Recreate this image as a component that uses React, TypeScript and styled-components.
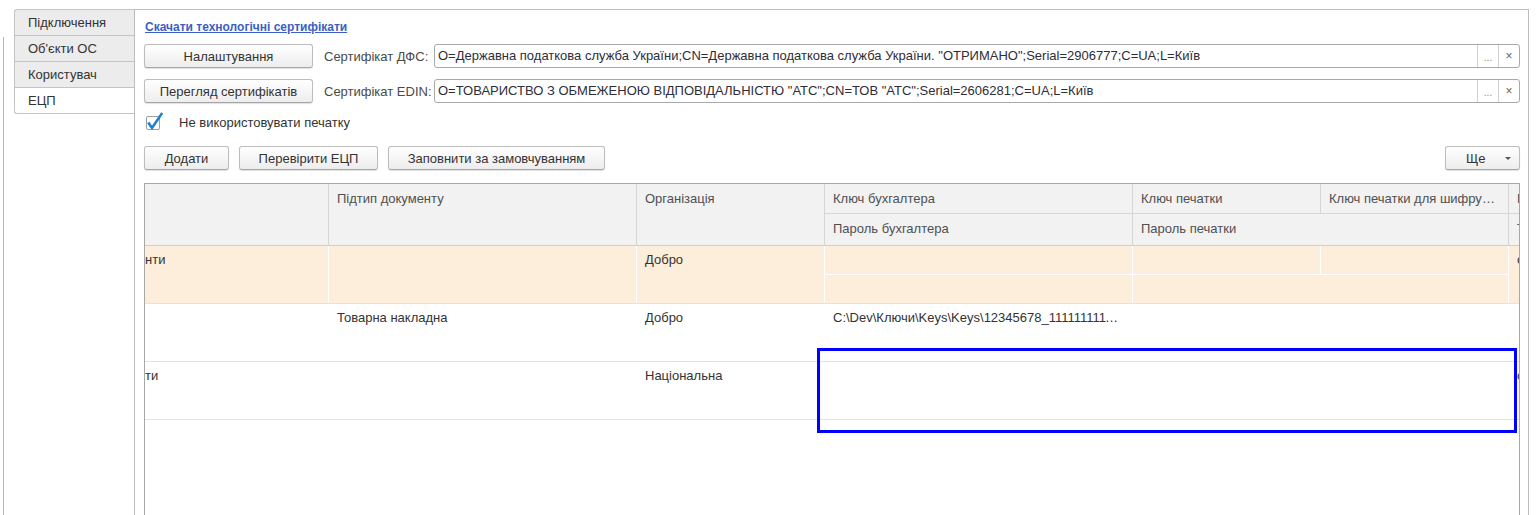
import React from "react";
import styled, { createGlobalStyle } from "styled-components";

const GlobalStyle = createGlobalStyle`
  html, body { margin: 0; padding: 0; overflow: hidden; background: #fff; }
  body { font-family: "Liberation Sans", Arial, sans-serif; font-size: 13px; color: #333; }
  * { box-sizing: border-box; }
`;

const COLS = "184px 308px 188px 308px 188px 188px 188px";

const Page = styled.div`
  display: flex;
  height: 515px;
  padding-top: 9px;
  overflow: hidden;
`;

const Gutter = styled.div`
  width: 14px;
  flex-shrink: 0;
  display: flex;
  padding: 28px 0 0 3px;
`;

const GutterLine = styled.div`
  width: 0;
  border-left: 1px solid #b8b8b8;
`;

const TabList = styled.div`
  width: 120px;
  flex-shrink: 0;
  display: flex;
  flex-direction: column;
`;

const Tab = styled.div<{ $active?: boolean; $first?: boolean; $last?: boolean }>`
  height: 27px;
  margin-top: ${(p) => (p.$first ? "0" : "-1px")};
  border: 1px solid #c4c4c4;
  border-right: none;
  border-radius: ${(p) => (p.$first ? "3px 0 0 0" : p.$last ? "0 0 0 3px" : "0")};
  background: ${(p) => (p.$active ? "#ffffff" : "#ececec")};
  padding-left: 13px;
  line-height: 25px;
  color: #333;
  white-space: nowrap;
`;

const Panel = styled.div`
  width: 1395px;
  flex-shrink: 0;
  border: 1px solid #bcbcbc;
  border-bottom: none;
  padding: 9px 8px 0 9px;
  display: flex;
  flex-direction: column;
`;

const LinkText = styled.a`
  align-self: flex-start;
  padding-left: 1px;
  font-size: 12px;
  font-weight: bold;
  line-height: 16px;
  color: #3c5fc4;
  text-decoration: underline;
  cursor: pointer;
`;

const Row = styled.div<{ $mt: number; $h?: number }>`
  display: flex;
  align-items: center;
  height: ${(p) => p.$h ?? 24}px;
  margin-top: ${(p) => p.$mt}px;
  flex-shrink: 0;
`;

const Button = styled.div<{ $w?: number; $ml?: number }>`
  width: ${(p) => (p.$w ? `${p.$w}px` : "auto")};
  margin-left: ${(p) => p.$ml ?? 0}px;
  height: 24px;
  flex-shrink: 0;
  border: 1px solid #bdbdbd;
  border-bottom-color: #a5a5a5;
  border-radius: 3px;
  background: linear-gradient(#ffffff, #ededed);
  box-shadow: 0 1px 1px rgba(0, 0, 0, 0.12);
  display: flex;
  align-items: center;
  justify-content: center;
  color: #333;
  white-space: nowrap;
`;

const MoreButton = styled(Button)`
  margin-left: auto;
  justify-content: flex-start;
  padding: 0 8px 0 20px;
`;

const Arrow = styled.span`
  margin-left: auto;
  width: 0;
  height: 0;
  border-left: 3px solid transparent;
  border-right: 3px solid transparent;
  border-top: 3px solid #555;
`;

const Label = styled.div`
  margin-left: 11px;
  width: 110px;
  flex-shrink: 0;
  color: #4a4a4a;
  white-space: nowrap;
`;

const Input = styled.div`
  flex: 1;
  height: 24px;
  border: 1px solid #a9a9a9;
  border-radius: 3px;
  display: flex;
  overflow: hidden;
  background: #fff;
`;

const InputText = styled.div`
  flex: 1;
  padding-left: 3px;
  line-height: 22px;
  white-space: nowrap;
  overflow: hidden;
  color: #2e2e3a;
`;

const InputButton = styled.div<{ $dots?: boolean }>`
  width: 21px;
  flex-shrink: 0;
  border-left: 1px solid #d2d2d2;
  display: flex;
  justify-content: center;
  align-items: ${(p) => (p.$dots ? "flex-end" : "center")};
  padding-bottom: ${(p) => (p.$dots ? "4px" : "0")};
  font-size: ${(p) => (p.$dots ? "10px" : "12px")};
  line-height: 10px;
  color: ${(p) => (p.$dots ? "#8a8a8a" : "#666")};
`;

const CheckBox = styled.div`
  position: relative;
  width: 14px;
  height: 14px;
  margin-left: 2px;
  border: 1px solid #9e9e9e;
  border-radius: 2px;
  background: #fff;
  flex-shrink: 0;
`;

const CheckMark = styled.svg`
  position: absolute;
  left: -1px;
  top: -5px;
`;

const CheckLabel = styled.div`
  margin-left: 19px;
  line-height: 14px;
  color: #333;
`;

const Table = styled.div`
  margin-top: 13px;
  height: 420px;
  flex-shrink: 0;
  border: 1px solid #a8a8a8;
  position: relative;
  overflow: hidden;
`;

const Header = styled.div`
  display: grid;
  grid-template-columns: ${COLS};
  grid-template-rows: 30px 31px;
  background: #f2f2f2;
  border-bottom: 1px solid #cfcfcf;
  width: max-content;
`;

const HCell = styled.div<{ $col: string; $row: string; $split?: boolean }>`
  grid-column: ${(p) => p.$col};
  grid-row: ${(p) => p.$row};
  border-right: 1px solid #d6d6d6;
  border-bottom: ${(p) => (p.$split ? "1px solid #d6d6d6" : "none")};
  padding: 0 8px;
  line-height: 29px;
  color: #505050;
  white-space: nowrap;
  overflow: hidden;
  text-overflow: ellipsis;
`;

const DataRow = styled.div<{ $hl?: boolean }>`
  display: grid;
  grid-template-columns: ${COLS};
  grid-template-rows: 29px 28px;
  background: ${(p) => (p.$hl ? "#fdeedb" : "#ffffff")};
  border-bottom: 1px solid #e3e3e3;
  width: max-content;
`;

const DCell = styled.div<{ $col: string; $row: string; $hl?: boolean; $split?: boolean; $flush?: boolean }>`
  grid-column: ${(p) => p.$col};
  grid-row: ${(p) => p.$row};
  border-right: 1px solid ${(p) => (p.$hl ? "#ffffff" : "transparent")};
  border-bottom: 1px solid ${(p) => (p.$split ? "#ffffff" : "transparent")};
  padding: 0 ${(p) => (p.$flush ? "0" : "8px")};
  line-height: 28px;
  color: #333;
  white-space: nowrap;
  overflow: hidden;
  text-overflow: ellipsis;
`;

const Highlight = styled.div`
  position: absolute;
  left: 672px;
  top: 164px;
  width: 700px;
  height: 85px;
  border: 3px solid #0000ff;
  pointer-events: none;
`;

type RowData = {
  hl?: boolean;
  first: string;
  subtype: string;
  org: string;
  key: string;
  last: string;
};

const rows: RowData[] = [
  { hl: true, first: "нти", subtype: "", org: "Добро", key: "", last: "с" },
  {
    first: "",
    subtype: "Товарна накладна",
    org: "Добро",
    key: "C:\\Dev\\Ключи\\Keys\\Keys\\12345678_11111111111111111.dat",
    last: "",
  },
  { first: "ти", subtype: "", org: "Національна", key: "", last: "с" },
];

export default function App() {
  return (
    <>
      <GlobalStyle />
      <Page>
        <Gutter>
          <GutterLine />
        </Gutter>
        <TabList>
          <Tab $first>Підключення</Tab>
          <Tab>Об'єкти ОС</Tab>
          <Tab>Користувач</Tab>
          <Tab $active $last>ЕЦП</Tab>
        </TabList>
        <Panel>
          <LinkText>Скачати технологічні сертифікати</LinkText>
          <Row $mt={9}>
            <Button $w={169}>Налаштування</Button>
            <Label>Сертифікат ДФС:</Label>
            <Input>
              <InputText>
                O=Державна податкова служба України;CN=Державна податкова служба України. "ОТРИМАНО";Serial=2906777;C=UA;L=Київ
              </InputText>
              <InputButton $dots>...</InputButton>
              <InputButton>×</InputButton>
            </Input>
          </Row>
          <Row $mt={11}>
            <Button $w={169}>Перегляд сертифікатів</Button>
            <Label>Сертифікат EDIN:</Label>
            <Input>
              <InputText>
                O=ТОВАРИСТВО З ОБМЕЖЕНОЮ ВІДПОВІДАЛЬНІСТЮ "АТС";CN=ТОВ "АТС";Serial=2606281;C=UA;L=Київ
              </InputText>
              <InputButton $dots>...</InputButton>
              <InputButton>×</InputButton>
            </Input>
          </Row>
          <Row $mt={13} $h={14}>
            <CheckBox>
              <CheckMark width="17" height="20" viewBox="0 0 17 20">
                <path d="M3 11.5 L6 16 L15.5 2" fill="none" stroke="#1f80d0" strokeWidth="2.6" strokeLinecap="square" />
              </CheckMark>
            </CheckBox>
            <CheckLabel>Не використовувати печатку</CheckLabel>
          </Row>
          <Row $mt={16}>
            <Button $w={85}>Додати</Button>
            <Button $w={139} $ml={10}>Перевірити ЕЦП</Button>
            <Button $w={217} $ml={10}>Заповнити за замовчуванням</Button>
            <MoreButton $w={75}>
              <span>Ще</span>
              <Arrow />
            </MoreButton>
          </Row>
          <Table>
            <Header>
              <HCell $col="1" $row="1 / 3"></HCell>
              <HCell $col="2" $row="1 / 3">Підтип документу</HCell>
              <HCell $col="3" $row="1 / 3">Організація</HCell>
              <HCell $col="4" $row="1" $split>Ключ бухгалтера</HCell>
              <HCell $col="4" $row="2">Пароль бухгалтера</HCell>
              <HCell $col="5" $row="1" $split>Ключ печатки</HCell>
              <HCell $col="6" $row="1" $split>Ключ печатки для шифрування</HCell>
              <HCell $col="5 / 7" $row="2">Пароль печатки</HCell>
              <HCell $col="7" $row="1" $split>Пароль для шифрування</HCell>
              <HCell $col="7" $row="2">Тип ключа</HCell>
            </Header>
            {rows.map((r, i) => (
              <DataRow key={i} $hl={r.hl}>
                <DCell $col="1" $row="1 / 3" $hl={r.hl} $flush>{r.first}</DCell>
                <DCell $col="2" $row="1 / 3" $hl={r.hl}>{r.subtype}</DCell>
                <DCell $col="3" $row="1 / 3" $hl={r.hl}>{r.org}</DCell>
                <DCell $col="4" $row="1" $hl={r.hl} $split={r.hl}>{r.key}</DCell>
                <DCell $col="4" $row="2" $hl={r.hl}></DCell>
                <DCell $col="5" $row="1" $hl={r.hl} $split={r.hl}></DCell>
                <DCell $col="6" $row="1" $hl={r.hl} $split={r.hl}></DCell>
                <DCell $col="5 / 7" $row="2" $hl={r.hl}></DCell>
                <DCell $col="7" $row="1 / 3" $hl={r.hl}>{r.last}</DCell>
              </DataRow>
            ))}
            <Highlight />
          </Table>
        </Panel>
      </Page>
    </>
  );
}
